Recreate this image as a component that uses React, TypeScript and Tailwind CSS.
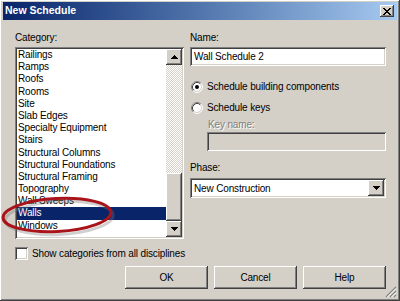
const raised =
  "shadow-[inset_-1px_-1px_#404040,inset_1px_1px_#ffffff,inset_-2px_-2px_#808080,inset_2px_2px_#d4d0c8]";
const sunken =
  "shadow-[inset_1px_1px_#808080,inset_-1px_-1px_#ffffff,inset_2px_2px_#404040,inset_-2px_-2px_#d4d0c8]";

const categories = [
  "Railings",
  "Ramps",
  "Roofs",
  "Rooms",
  "Site",
  "Slab Edges",
  "Specialty Equipment",
  "Stairs",
  "Structural Columns",
  "Structural Foundations",
  "Structural Framing",
  "Topography",
  "Wall Sweeps",
  "Walls",
  "Windows",
];

function Arrow({ up }: { up?: boolean }) {
  return (
    <svg width="7" height="4" viewBox="0 0 7 4" shapeRendering="crispEdges">
      <polygon points={up ? "0,4 7,4 3.5,0" : "0,0 7,0 3.5,4"} fill="#000" />
    </svg>
  );
}

function ArrowBtn({ up }: { up?: boolean }) {
  return (
    <div className={`flex h-[16px] w-[16px] items-center justify-center bg-[#d4d0c8] ${raised}`}>
      <Arrow up={up} />
    </div>
  );
}

function Radio({ checked }: { checked?: boolean }) {
  return (
    <svg width="12" height="12" viewBox="0 0 12 12" className="shrink-0">
      <circle cx="6" cy="6" r="5" fill="#fff" />
      <path d="M2.11 9.89 A5.5 5.5 0 0 1 9.89 2.11" stroke="#808080" fill="none" />
      <path d="M9.89 2.11 A5.5 5.5 0 0 1 2.11 9.89" stroke="#ffffff" fill="none" />
      <path d="M2.82 9.18 A4.5 4.5 0 0 1 9.18 2.82" stroke="#404040" fill="none" />
      <path d="M9.18 2.82 A4.5 4.5 0 0 1 2.82 9.18" stroke="#d4d0c8" fill="none" />
      {checked && <circle cx="6" cy="6" r="2" fill="#000" />}
    </svg>
  );
}

export default function App() {
  return (
    <div className="relative flex h-[301px] w-[400px] flex-col overflow-hidden bg-[#d4d0c8] font-['Liberation_Sans',Arial,sans-serif] text-[10px] tracking-[-0.15px] text-black shadow-[inset_-1px_-1px_#404040,inset_1px_1px_#ffffff,inset_-2px_-2px_#808080]">
      {/* title bar */}
      <div className="mx-[3px] mt-[2px] flex h-[18px] items-center justify-between bg-gradient-to-r from-[#0a246a] to-[#a6caf0] pl-[2px] pr-[3px]">
        <span className="text-[10.5px] font-bold tracking-normal text-white">New Schedule</span>
        <div className={`flex h-[12px] w-[14px] items-center justify-center bg-[#d4d0c8] ${raised}`}>
          <svg width="8" height="7" viewBox="0 0 8 7" shapeRendering="crispEdges">
            <path d="M0 0h2v1h-2zM6 0h2v1h-2zM1 1h2v1h-2zM5 1h2v1h-2zM2 2h4v1h-4zM3 3h2v1h-2zM2 4h4v1h-4zM1 5h2v1h-2zM5 5h2v1h-2zM0 6h2v1h-2zM6 6h2v1h-2z" fill="#000" />
          </svg>
        </div>
      </div>

      <div className="mt-[12px] flex">
        {/* left column */}
        <div className="ml-[15px] flex w-[169px] flex-col">
          <div className="h-[12px] leading-[12px]">Category:</div>
          <div className={`mt-[3px] flex h-[192px] bg-white p-[2px] ${sunken}`}>
            <div className="flex flex-1 flex-col">
              {categories.map((c) => (
                <div
                  key={c}
                  className={`h-[12.2px] whitespace-nowrap pl-[1px] leading-[12.2px] ${
                    c === "Walls" ? "bg-[#0a246a] text-white" : ""
                  }`}
                >
                  {c}
                </div>
              ))}
            </div>
            <div className="flex w-[16px] flex-col">
              <ArrowBtn up />
              <div className="flex-1 bg-[image:repeating-conic-gradient(#ffffff_0_25%,#d4d0c8_0_50%)] bg-[length:2px_2px]" />
              <div className={`h-[48px] bg-[#d4d0c8] ${raised}`} />
              <ArrowBtn />
            </div>
          </div>
          <div className="mt-[7px] flex items-center gap-[4px] whitespace-nowrap">
            <div className={`h-[13px] w-[13px] shrink-0 bg-white ${sunken}`} />
            <span>Show categories from all disciplines</span>
          </div>
        </div>

        {/* right column */}
        <div className="ml-[6px] flex w-[196px] flex-col">
          <div className="h-[12px] leading-[12px]">Name:</div>
          <div className={`mt-[3px] flex h-[19px] items-center bg-white pl-[4px] ${sunken}`}>Wall Schedule 2</div>
          <div className="ml-[1px] mt-[14px] flex h-[13px] items-center gap-[4px]">
            <Radio checked />
            <span>Schedule building components</span>
          </div>
          <div className="ml-[1px] mt-[8px] flex h-[13px] items-center gap-[4px]">
            <Radio />
            <span>Schedule keys</span>
          </div>
          <div className="ml-[18px] mt-[5px] h-[12px] leading-[12px] text-[#808080] [text-shadow:1px_1px_0_#ffffff]">
            Key name:
          </div>
          <div className={`ml-[17px] mt-[1px] h-[19px] bg-[#d4d0c8] ${sunken}`} />
          <div className="mt-[11px] h-[12px] leading-[12px]">Phase:</div>
          <div className={`mt-[4px] flex h-[20px] items-center bg-white p-[2px] ${sunken}`}>
            <span className="flex-1 pl-[2px]">New Construction</span>
            <div className={`flex h-[16px] w-[16px] items-center justify-center bg-[#d4d0c8] ${raised}`}>
              <Arrow />
            </div>
          </div>
        </div>
      </div>

      {/* buttons */}
      <div className="mt-[5px] flex justify-end gap-[6px] pr-[14px]">
        {["OK", "Cancel", "Help"].map((b) => (
          <div key={b} className={`flex h-[23px] w-[83px] items-center justify-center bg-[#d4d0c8] ${raised}`}>
            {b}
          </div>
        ))}
      </div>

      {/* resize grip */}
      <svg className="absolute bottom-[3px] right-[3px]" width="12" height="12" viewBox="0 0 12 12">
        <path d="M11 1L1 11M11 5L5 11M11 9L9 11" stroke="#808080" strokeWidth="1.2" />
        <path d="M11 2.5L2.5 11M11 6.5L6.5 11M11 10.5L10.5 11" stroke="#ffffff" strokeWidth="1" />
      </svg>

      {/* red annotation ellipse */}
      <svg className="pointer-events-none absolute left-0 top-[190px]" width="125" height="50" viewBox="0 0 125 50">
        <ellipse cx="58" cy="26.5" rx="54" ry="16.5" fill="none" stroke="#777" strokeOpacity="0.35" strokeWidth="3" transform="rotate(-3 58 26) translate(1 1.5)" />
        <ellipse cx="57" cy="25" rx="54" ry="16.5" fill="none" stroke="#a8141a" strokeWidth="3" transform="rotate(-3 57 25)" />
      </svg>
    </div>
  );
}
